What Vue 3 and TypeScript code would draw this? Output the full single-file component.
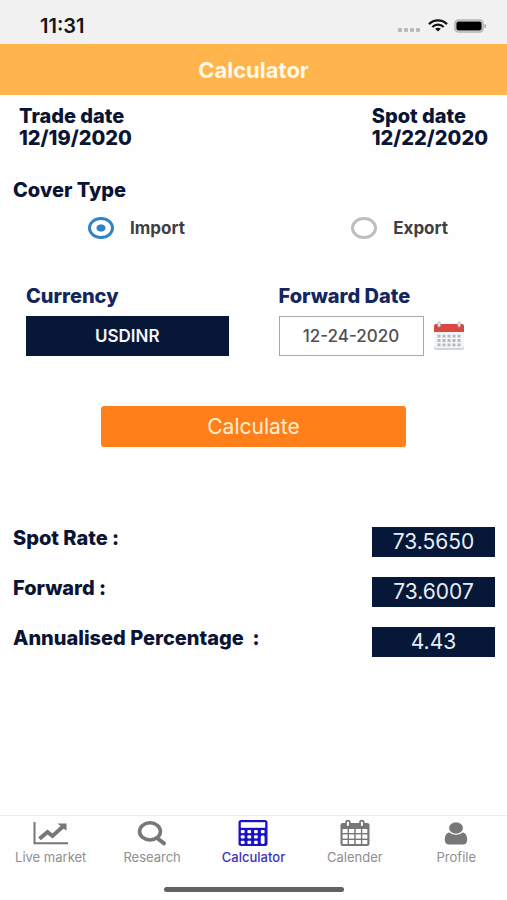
<script setup lang="ts">
import { ref } from 'vue'

interface Tab {
  id: string
  label: string
}

interface Result {
  id: string
  label: string
  value: string
}

const cover = ref<string>('import')
const currency = ref<string>('USDINR')
const forwardDate = ref<string>('12-24-2020')
const activeTab = ref<string>('calculator')

const tabs: Tab[] = [
  { id: 'market', label: 'Live market' },
  { id: 'research', label: 'Research' },
  { id: 'calculator', label: 'Calculator' },
  { id: 'calender', label: 'Calender' },
  { id: 'profile', label: 'Profile' },
]

const results: Result[] = [
  { id: 'spot', label: 'Spot Rate :', value: '73.5650' },
  { id: 'forward', label: 'Forward :', value: '73.6007' },
  { id: 'percentage', label: 'Annualised Percentage  :', value: '4.43' },
]
</script>

<template>
  <div class="screen">
    <div class="status">
      <span class="clock">11:31</span>
      <div class="status-icons">
        <svg width="24" height="6" viewBox="0 0 24 6" fill="#b9b9b9">
          <rect x="0" y="1" width="4" height="4" rx="1" />
          <rect x="6" y="1" width="4" height="4" rx="1" />
          <rect x="12" y="1" width="4" height="4" rx="1" />
          <rect x="18" y="1" width="4" height="4" rx="1" />
        </svg>
        <svg width="20" height="13" viewBox="0 0 20 13" fill="none" stroke="#111" stroke-width="2.2">
          <path d="M1 5.1C6 .2 14 .2 19 5.1" />
          <path d="M4.3 8C7.6 4.9 12.4 4.9 15.7 8" />
          <path d="M7.1 9.8C8.8 8.4 11.2 8.4 12.9 9.8L10 12.6z" fill="#111" stroke="none" />
        </svg>
        <svg width="33" height="14" viewBox="0 0 33 14">
          <rect x="1" y="1" width="28" height="12" rx="3.5" fill="#f1f1f1" stroke="#b3b3b3" stroke-width="1.6" />
          <rect x="2.4" y="2.4" width="25.2" height="9.2" rx="2" fill="#000" />
          <path d="M30.4 4.8c2.4.8 2.4 3.6 0 4.4z" fill="#a5a5a5" />
        </svg>
      </div>
    </div>

    <header class="title-bar">
      <h1>Calculator</h1>
    </header>

    <main class="content">
      <div class="dates">
        <div>Trade date<br />12/19/2020</div>
        <div>Spot date<br />12/22/2020</div>
      </div>

      <fieldset class="cover">
        <legend>Cover Type</legend>
        <div class="options">
          <label><input v-model="cover" type="radio" name="cover" value="import" />Import</label>
          <label><input v-model="cover" type="radio" name="cover" value="export" />Export</label>
        </div>
      </fieldset>

      <div class="fields">
        <div class="field">
          <label for="currency">Currency</label>
          <select id="currency" v-model="currency">
            <option>USDINR</option>
          </select>
        </div>
        <div class="field">
          <label for="forward-date">Forward Date</label>
          <div class="date-row">
            <input id="forward-date" v-model="forwardDate" type="text" />
            <button class="picker" type="button" aria-label="Pick forward date">
              <svg width="32" height="30" viewBox="0 0 32 30">
                <rect x="1" y="5" width="30" height="24" rx="2" fill="#cfd6da" />
                <rect x="1" y="4" width="30" height="23" rx="2" fill="#f3f5f7" />
                <path d="M1 11V5q0-2 2-2h26q2 0 2 2v6z" fill="#dc473f" />
                <g fill="none" stroke="#b4bac2" stroke-width="2.8" stroke-dasharray="3 2">
                  <path d="M4.5 15.2H27.5M4.5 19.5H27.5M4.5 23.8H27.5" />
                </g>
                <g fill="#c0505a">
                  <circle cx="6" cy="5.2" r="2.4" />
                  <circle cx="26" cy="5.2" r="2.4" />
                </g>
                <g fill="#e9eaec" stroke="#a9a9ad" stroke-width=".7">
                  <rect x="4.8" y="1" width="2.6" height="5" rx="1.3" />
                  <rect x="24.8" y="1" width="2.6" height="5" rx="1.3" />
                </g>
              </svg>
            </button>
          </div>
        </div>
      </div>

      <button class="calculate" type="button">Calculate</button>

      <dl class="results">
        <div v-for="item in results" :key="item.id" class="result">
          <dt>{{ item.label }}</dt>
          <dd>{{ item.value }}</dd>
        </div>
      </dl>
    </main>

    <nav class="tabs">
      <a
        v-for="tab in tabs"
        :key="tab.id"
        :href="'#' + tab.id"
        :class="{ active: tab.id === activeTab }"
        @click="activeTab = tab.id"
      >
        <svg v-if="tab.id === 'market'" width="36" height="28" viewBox="0 0 36 28" fill="none" stroke="currentColor">
          <path d="M1.5 3V24.2H35" stroke-width="2" />
          <path d="M6.5 19.8L14.5 13L19.5 17L30 7.6" stroke-width="4" />
          <path d="M24.5 4.5H33.5V11.8z" fill="currentColor" stroke="none" />
        </svg>
        <svg v-else-if="tab.id === 'research'" width="30" height="28" viewBox="0 0 30 28" fill="none" stroke="currentColor">
          <ellipse cx="13" cy="12.4" rx="10.4" ry="8.6" stroke-width="3.6" />
          <path d="M20 19L27 24.4" stroke-width="4" stroke-linecap="round" />
        </svg>
        <svg v-else-if="tab.id === 'calculator'" width="30" height="28" viewBox="0 0 30 28">
          <rect x=".5" y="1" width="29" height="26" rx="2.5" fill="currentColor" />
          <g fill="#fff">
            <rect x="2.8" y="3.2" width="24.4" height="5.6" />
            <rect x="2.8" y="11" width="3.8" height="3.2" rx="1" />
            <rect x="9.4" y="11" width="3.8" height="3.2" rx="1" />
            <rect x="16" y="11" width="3.8" height="3.2" rx="1" />
            <rect x="22.8" y="11" width="3.8" height="3.2" rx="1" />
            <rect x="2.8" y="16.3" width="3.8" height="3.2" rx="1" />
            <rect x="9.4" y="16.3" width="3.8" height="3.2" rx="1" />
            <rect x="16" y="16.3" width="3.8" height="3.2" rx="1" />
            <rect x="2.8" y="21.7" width="3.8" height="3.2" rx="1" />
            <rect x="9.4" y="21.7" width="3.8" height="3.2" rx="1" />
            <rect x="16" y="21.7" width="3.8" height="3.2" rx="1" />
            <rect x="22.8" y="16.6" width="3.8" height="8.3" rx="1.4" />
          </g>
        </svg>
        <svg v-else-if="tab.id === 'calender'" width="30" height="28" viewBox="0 0 30 28">
          <rect x=".5" y="4" width="29" height="23" rx="2.2" fill="currentColor" />
          <g fill="#fff">
            <rect x="2.6" y="10" width="5" height="4" />
            <rect x="9" y="10" width="5.2" height="4" />
            <rect x="15.7" y="10" width="5.2" height="4" />
            <rect x="22.3" y="10" width="5" height="4" />
            <rect x="2.6" y="15.4" width="5" height="4.2" />
            <rect x="9" y="15.4" width="5.2" height="4.2" />
            <rect x="15.7" y="15.4" width="5.2" height="4.2" />
            <rect x="22.3" y="15.4" width="5" height="4.2" />
            <rect x="2.6" y="21" width="5" height="4" />
            <rect x="9" y="21" width="5.2" height="4" />
            <rect x="15.7" y="21" width="5.2" height="4" />
            <rect x="22.3" y="21" width="5" height="4" />
          </g>
          <g fill="#fff" stroke="currentColor" stroke-width="1.7">
            <rect x="6" y="1.6" width="3.8" height="6.2" rx="1.9" />
            <rect x="20" y="1.6" width="3.8" height="6.2" rx="1.9" />
          </g>
        </svg>
        <svg v-else width="26" height="28" viewBox="0 0 26 28" fill="currentColor">
          <path d="M6.6 13.5C3 14 1.8 17 1.8 20.8C1.8 24 3.1 25.6 6.4 25.6H19.6C22.9 25.6 24.2 24 24.2 20.8C24.2 17 23 14 19.4 13.5C16.1 16.5 9.900 16.500 6.600 13.500z" />
          <ellipse cx="13" cy="9" rx="7.2" ry="6" stroke="#fff" stroke-width=".6" />
        </svg>
        <span>{{ tab.label }}</span>
      </a>
    </nav>
    <div class="home"><div class="home-bar"></div></div>
  </div>
</template>

<style>
body {
  margin: 0;
  background: #fefefe;
}
</style>

<style scoped>
.screen {
  display: flex;
  flex-direction: column;
  min-height: 100vh;
  background: #fefefe;
  color: #0b1433;
  font-family: Inter, "Liberation Sans", sans-serif;
}

button,
input,
select {
  font-family: inherit;
}

.status {
  display: flex;
  justify-content: space-between;
  align-items: center;
  box-sizing: border-box;
  height: 44px;
  padding: 7px 20px 0 40px;
  background: #f1f1f1;
}

.clock {
  color: #151515;
  font-size: 20px;
  font-weight: 600;
}

.status-icons {
  display: flex;
  align-items: center;
  gap: 6px;
}

.status-icons svg:first-child {
  margin-top: 8px;
}

.title-bar {
  display: flex;
  align-items: center;
  justify-content: center;
  height: 51px;
  background: #ffb54b;
}

h1 {
  margin: 0;
  color: #fff8e6;
  font-size: 22px;
  font-weight: 700;
}

.content {
  display: flex;
  flex: 1;
  flex-direction: column;
}

.dates {
  display: flex;
  justify-content: space-between;
  padding: 10px 19px 0 19px;
  font-size: 20px;
  font-weight: 800;
  line-height: 22px;
}

.cover {
  min-width: 0;
  margin: 29px 0 0;
  padding: 0;
  border: 0;
}

legend {
  padding: 0 13px;
  font-size: 20px;
  font-weight: 800;
  line-height: 24px;
}

.options {
  display: flex;
  justify-content: space-between;
  padding: 15px 59px 0 88px;
}

.options label {
  display: flex;
  align-items: center;
  gap: 16px;
  color: #3f3f42;
  font-size: 17px;
  font-weight: 700;
  line-height: 22px;
}

.options input {
  appearance: none;
  width: 26px;
  height: 22px;
  margin: 0;
  border: 3px solid #bdbdbd;
  border-radius: 50%;
}

.options input:checked {
  border-color: #2f83c5;
  background: radial-gradient(ellipse 5px 4px, #2f83c5 80%, transparent) no-repeat;
}

.fields {
  display: grid;
  grid-template-columns: 1fr 1fr;
  gap: 50px;
  padding: 45px 26px 0;
}

.field {
  display: flex;
  flex-direction: column;
  gap: 8px;
}

.field > label {
  color: #142660;
  font-size: 20px;
  font-weight: 800;
  line-height: 24px;
}

select {
  appearance: none;
  height: 40px;
  padding: 0;
  border: 0;
  border-radius: 0;
  background: #071737;
  color: #f2f5fa;
  font-size: 17px;
  font-weight: 600;
  text-align: center;
  text-align-last: center;
}

.date-row {
  display: flex;
  align-items: center;
  gap: 9px;
}

.date-row input {
  box-sizing: border-box;
  flex: 1;
  min-width: 0;
  max-width: 145px;
  height: 40px;
  padding: 0;
  border: 1px solid #a8a8a8;
  background: #fff;
  color: #505055;
  font-size: 17px;
  font-weight: 500;
  text-align: center;
}

.picker {
  display: flex;
  padding: 0;
  border: 0;
  background: none;
}

.calculate {
  height: 41px;
  margin: 50px 20% 0;
  border: 0;
  border-radius: 3px;
  background: #ff801b;
  color: #ffefd2;
  font-size: 21px;
}

.results {
  display: flex;
  flex-direction: column;
  gap: 20px;
  margin: 80px 12px 20px 13px;
}

.result {
  display: flex;
  justify-content: space-between;
}

dt {
  font-size: 20px;
  font-weight: 800;
  line-height: 22px;
  white-space: pre;
}

dd {
  width: 123px;
  margin: 0;
  background: #071737;
  color: #e6edf6;
  font-size: 21px;
  line-height: 30px;
  text-align: center;
}

.tabs {
  display: grid;
  grid-template-columns: repeat(5, 1fr);
  padding-top: 3px;
  border-top: 1px solid #eeeeee;
}

.tabs a {
  display: flex;
  flex-direction: column;
  align-items: center;
  gap: 2px;
  color: #777;
  font-size: 13px;
  line-height: 16px;
  text-decoration: none;
}

.tabs span {
  color: #8f8f8f;
}

.tabs .active {
  color: #1a10c4;
  font-weight: 500;
}

.tabs .active span {
  color: #3d32bd;
}

.home {
  display: flex;
  justify-content: center;
  padding: 22px 0 8px;
}

.home-bar {
  width: 180px;
  height: 5px;
  border-radius: 3px;
  background: #626262;
}
</style>
